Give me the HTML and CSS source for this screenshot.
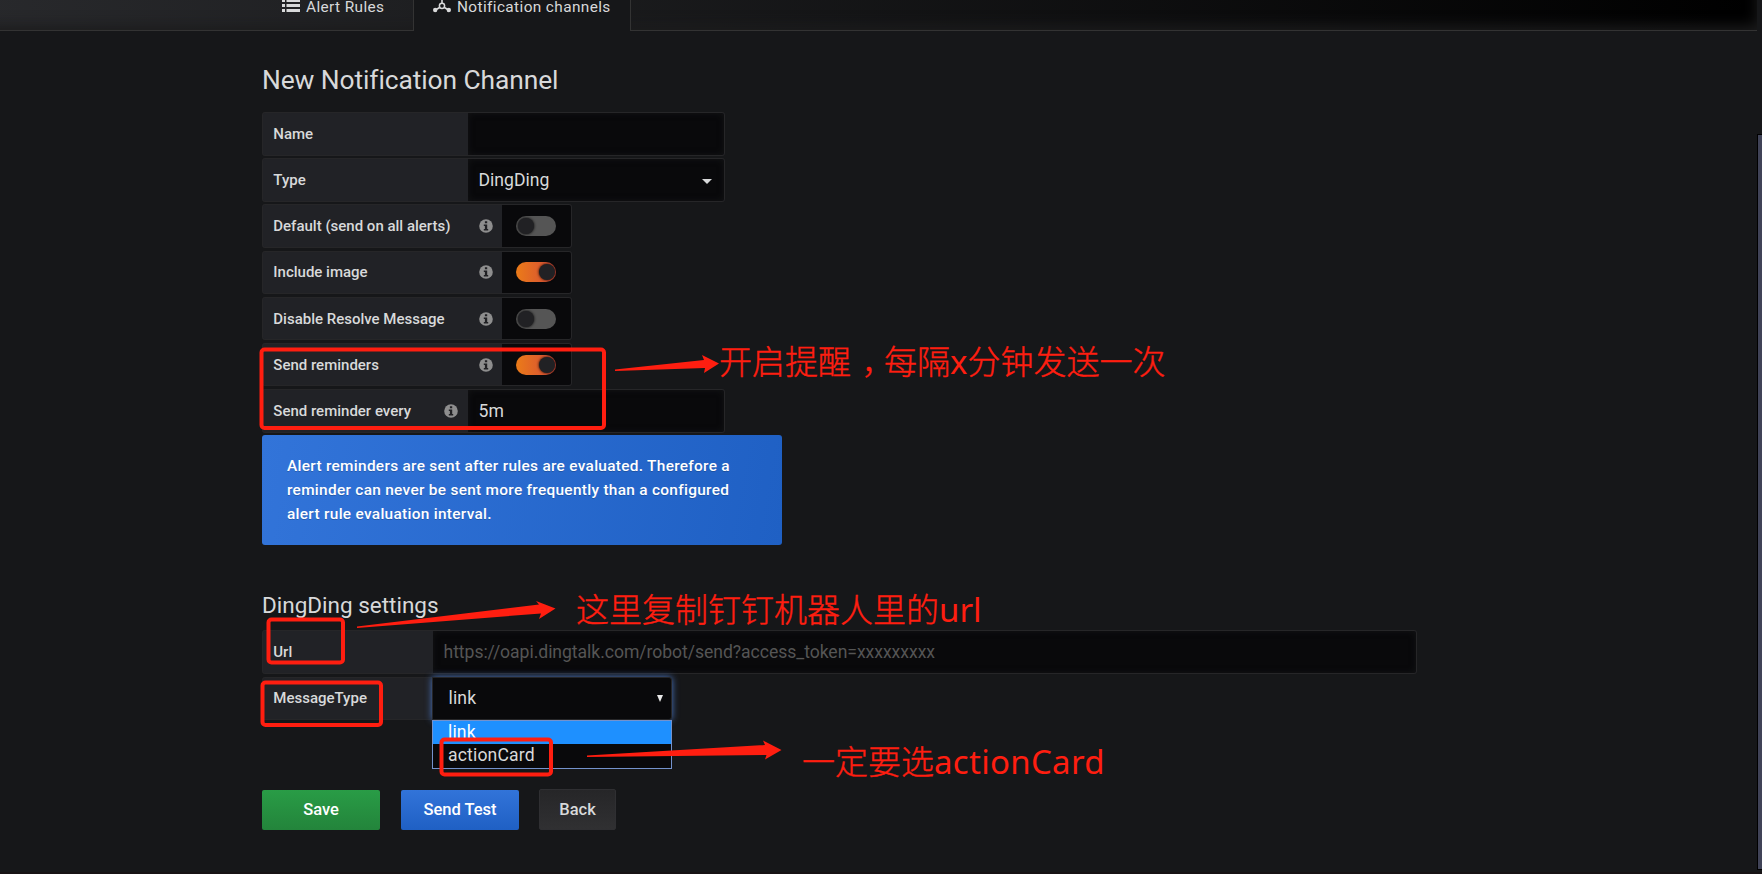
FILE: index.html
```html
<!DOCTYPE html>
<html lang="en">
<head>
    <meta charset="UTF-8">
    <meta name="viewport" content="width=device-width, initial-scale=1.0">
    <title>New Notification Channel</title>
    <link rel="stylesheet" href="styles.css">
</head>
<body>
    <svg class="sprite">
        <symbol id="info" viewBox="0 0 14 14">
            <circle cx="7" cy="7" r="6.8" fill="#8e8e8e"/>
            <path d="M5.9 2.2h2.3v2H5.9zM4.8 5.4h3.4v4.5h1v1.5H4.8V9.9h1.1v-3H4.8z" fill="#212124"/>
        </symbol>
    </svg>

    <header class="page-header">
        <nav class="tabs">
            <a class="tab tab-rules">
                <svg class="tab-icon" width="18" height="16" viewBox="0 0 18 16">
                    <path d="M0 1h3v3H0zM4.5 1H18v3H4.5zM0 6h3v3H0zM4.5 6H18v3H4.5zM0 11h3v3H0zM4.5 11H18v3H4.5z" fill="#d8d9da"/>
                </svg>
                <span>Alert Rules</span>
            </a>
            <a class="tab tab-channels active">
                <svg class="tab-icon" width="18" height="18" viewBox="0 0 18 18">
                    <path d="M9 2v7M9 11L2.5 15M9 11l6.5 4" stroke="#d8d9da" stroke-width="1.6" fill="none"/>
                    <circle cx="9" cy="10.8" r="2.6" fill="#161719" stroke="#d8d9da" stroke-width="1.5"/>
                    <circle cx="9" cy="2" r="2" fill="#d8d9da"/>
                    <circle cx="2.2" cy="15" r="2.2" fill="#d8d9da"/>
                    <circle cx="15.8" cy="15" r="2.2" fill="#d8d9da"/>
                </svg>
                <span>Notification channels</span>
            </a>
        </nav>
    </header>

    <main class="page">
        <h1 class="page-heading">New Notification Channel</h1>
        <form>
            <div class="form-row">
                <label class="form-label w-name">Name</label>
                <div class="form-input w-input"></div>
            </div>
            <div class="form-row">
                <label class="form-label w-name">Type</label>
                <div class="form-input w-input"><span>DingDing</span><i class="caret"></i></div>
            </div>
            <div class="form-row">
                <label class="form-label w-switch">Default (send on all alerts)<svg class="info"><use href="#info"/></svg></label>
                <div class="switch"><i class="toggle"></i></div>
            </div>
            <div class="form-row">
                <label class="form-label w-switch">Include image<svg class="info"><use href="#info"/></svg></label>
                <div class="switch"><i class="toggle on"></i></div>
            </div>
            <div class="form-row">
                <label class="form-label w-switch">Disable Resolve Message<svg class="info"><use href="#info"/></svg></label>
                <div class="switch"><i class="toggle"></i></div>
            </div>
            <div class="form-row">
                <label class="form-label w-switch">Send reminders<svg class="info"><use href="#info"/></svg></label>
                <div class="switch"><i class="toggle on"></i></div>
            </div>
            <div class="form-row">
                <label class="form-label w-name">Send reminder every<svg class="info"><use href="#info"/></svg></label>
                <div class="form-input w-input">5m</div>
            </div>

            <div class="alert-info">
                Alert reminders are sent after rules are evaluated. Therefore a<br>
                reminder can never be sent more frequently than a configured<br>
                alert rule evaluation interval.
            </div>

            <h2 class="section-heading">DingDing settings</h2>
            <div class="form-row">
                <label class="form-label w-setting">Url</label>
                <div class="form-input w-url placeholder">https://oapi.dingtalk.com/robot/send?access_token=xxxxxxxxx</div>
            </div>
            <div class="form-row">
                <label class="form-label w-setting">MessageType</label>
                <div class="select">
                    <span>link</span><i class="select-arrow"></i>
                    <div class="options">
                        <div class="option selected">link</div>
                        <div class="option">actionCard</div>
                    </div>
                </div>
            </div>

            <div class="buttons">
                <button type="button" class="btn btn-save">Save</button>
                <button type="button" class="btn btn-test">Send Test</button>
                <button type="button" class="btn btn-back">Back</button>
            </div>
        </form>
    </main>

    <div class="scrollbar"></div>
    <div class="bottom-line"></div>

    <!-- red notes drawn over the form -->
    <svg class="marks" width="1762" height="874" viewBox="0 0 1762 874">
        <g fill="none" stroke="#ff1e10" stroke-width="4">
            <rect x="261.5" y="349.5" width="342.5" height="78.5" rx="3"/>
            <rect x="268.5" y="619.5" width="74.5" height="43" rx="3"/>
            <rect x="262.5" y="682.5" width="118.5" height="42.5" rx="3"/>
            <rect x="441.5" y="739.5" width="109.5" height="35" rx="3"/>
        </g>
        <g fill="#ff1e10">
            <path d="M615 369.5L704 360l-2-5 17 8.5-15 9.5 1-5-90 3z"/>
            <path d="M357 626.5L539 604.5l-3-3.5 19.5 7.5-16.5 10.5 2-5.5L357 628z"/>
            <path d="M587 755.5L765 745l-2-4.5 18.5 9.5-16.5 9.5 1.5-4.5L587 757z"/>
        </g>
    </svg>
    <div class="note note-reminder">开启提醒<span class="comma">，</span>每隔<span class="latin">x</span>分钟发送一次</div>
    <div class="note note-url">这里复制钉钉机器人里的<span class="latin">url</span></div>
    <div class="note note-type">一定要选<span class="latin">actionCard</span></div>
</body>
</html>
```
FILE: styles.css
```css
* {
    box-sizing: border-box;
}
body {
    margin: 0;
    height: 874px;
    overflow: hidden;
    position: relative;
    background: #161719;
    color: #d8d9da;
    font-family: Roboto, "Noto Sans CJK SC", sans-serif;
    font-size: 15.4px;
}
.sprite {
    display: none;
}

/* header, scrolled partly out of view */
.page-header {
    width: 1817px;
    height: 91px;
    margin: -60px 0 0 -60px;
    padding: 60px 0 0 322px;
    background: linear-gradient(90deg, #292a2d, #000);
    box-shadow: inset 0 -4px 14px #1c1c1d;
    border-bottom: 1px solid #333;
}
.tabs {
    display: flex;
    height: 31px;
}
.tab {
    display: flex;
    align-items: flex-start;
    line-height: 20px;
    letter-spacing: 0.38px;
    white-space: nowrap;
}
.tab span {
    margin-top: -3px;
}
.tab-icon {
    flex: none;
    margin-right: 6px;
}
.tab-rules {
    width: 151px;
    padding-left: 20px;
}
.tab-rules .tab-icon {
    margin-top: -2px;
}
.tab-channels {
    width: 218px;
    padding-left: 19px;
    background: #161719;
    border: solid #333;
    border-width: 0 1px;
}
.tab-channels .tab-icon {
    margin-top: -5px;
}

/* form */
.page {
    padding: 34px 0 0 262px;
}
.page-heading {
    margin: 0 0 17px;
    font-size: 26.4px;
    font-weight: 400;
    line-height: 30px;
    letter-spacing: -0.1px;
}
.form-row {
    display: flex;
    height: 43.5px;
    margin-bottom: 2.7px;
}
.form-label {
    display: flex;
    align-items: center;
    justify-content: space-between;
    padding: 0 9px 0 10.3px;
    background: #212226;
    border: 1px solid #262628;
    border-right: none;
    border-radius: 3px 0 0 3px;
    font-size: 15px;
    font-weight: 500;
    white-space: nowrap;
}
.w-name {
    width: 206px;
    padding-right: 10px;
}
.w-switch {
    width: 240px;
}
.w-setting {
    width: 171px;
}
.info {
    width: 14px;
    height: 14px;
}
.form-input {
    display: flex;
    align-items: center;
    justify-content: space-between;
    padding: 0 12px 0 10.5px;
    background: #09090b;
    border: 1px solid #262628;
    border-left: none;
    border-radius: 0 3px 3px 0;
    box-shadow: inset 0 0 6px #141517;
    font-size: 17.6px;
}
.w-input {
    width: 257px;
}
.w-url {
    width: 984px;
}
.placeholder {
    color: #555;
    letter-spacing: -0.05px;
}
.caret {
    border: 5px solid transparent;
    border-top-color: #d8d9da;
    border-bottom: none;
    margin-top: 3px;
}
.switch {
    display: flex;
    align-items: center;
    width: 70px;
    padding-left: 14px;
    background: #09090b;
    border: 1px solid #262628;
    border-left: none;
    border-radius: 0 3px 3px 0;
}
.toggle {
    display: flex;
    align-items: center;
    width: 40px;
    height: 20px;
    padding: 0 2px;
    border-radius: 10px;
    background: #555;
}
.toggle::before {
    content: "";
    width: 16px;
    height: 16px;
    border-radius: 50%;
    background: #212124;
    box-shadow: 0 0 3px #000;
}
.toggle.on {
    justify-content: flex-end;
    padding-right: 1px;
    background: linear-gradient(90deg, #eb7b18, #d44a3a);
}

.alert-info {
    width: 520px;
    height: 110px;
    padding: 18.5px 25px;
    background: linear-gradient(100deg, #3274d9, #1f60c4);
    border-radius: 3px;
    color: #fff;
    font-weight: 500;
    line-height: 24px;
    letter-spacing: 0.3px;
    white-space: nowrap;
    text-shadow: 0 1px 0 rgba(0, 0, 0, 0.2);
}

.section-heading {
    margin: 48px 0 13px;
    font-size: 22.5px;
    font-weight: 400;
    line-height: 24px;
}

.select {
    position: relative;
    display: flex;
    align-items: center;
    justify-content: space-between;
    width: 240px;
    margin-left: -1px;
    padding: 0 8px 0 15.5px;
    background: #09090b;
    border: 1px solid #262628;
    border-radius: 0 3px 3px 0;
    box-shadow: 0 0 7px #4a76c4;
    font-size: 17.6px;
    letter-spacing: 0.15px;
}
.select-arrow {
    border: 3.5px solid transparent;
    border-top: 7px solid #e8e8e8;
    border-bottom: none;
}
.options {
    position: absolute;
    left: -1px;
    top: 42px;
    width: 240px;
    height: 49px;
    background: #09090b;
    border: 1px solid #7492cc;
}
.option {
    height: 23px;
    padding-left: 15px;
    line-height: 22px;
}
.option.selected {
    background: #1e90ff;
    color: #fff;
}

.buttons {
    display: flex;
    align-items: flex-end;
    margin-top: 68.5px;
}
.btn {
    height: 40px;
    padding: 0;
    border: none;
    border-radius: 2px;
    color: #fff;
    font-family: inherit;
    font-size: 16.5px;
    font-weight: 500;
}
.btn-save {
    width: 118px;
    margin-right: 21px;
    background: linear-gradient(#299c46, #23843b);
}
.btn-test {
    width: 118px;
    margin-right: 20px;
    background: linear-gradient(#3274d9, #1f60c4);
}
.btn-back {
    width: 77px;
    height: 41px;
    background: linear-gradient(#262628, #303032);
    border: 1px solid #2f2f32;
    color: #d8d9da;
}

.scrollbar {
    position: absolute;
    left: 1757px;
    top: 134px;
    width: 6px;
    height: 736px;
    background: #404357;
    border: 1px solid #000;
}
.bottom-line {
    position: absolute;
    left: 0;
    bottom: 0;
    width: 100%;
    height: 2px;
    background: #171214;
}

/* notes */
.marks {
    position: absolute;
    left: 0;
    top: 0;
}
.note {
    position: absolute;
    color: #ff1e10;
    font-family: "Noto Sans", "Noto Sans CJK SC", sans-serif;
    font-size: 33px;
    font-weight: 300;
    line-height: 40px;
    white-space: nowrap;
    -webkit-text-stroke: 0.4px #ff1e10;
}
.comma {
    padding: 0 6px 0 10.5px;
    font-feature-settings: "halt";
}
.latin {
    font-weight: 400;
    -webkit-text-stroke: 0;
}
.note-reminder {
    left: 719px;
    top: 342px;
}
.note-url {
    left: 576px;
    top: 590px;
}
.note-type {
    left: 802px;
    top: 742px;
}
.note-type .latin {
    letter-spacing: 0.3px;
}
```
